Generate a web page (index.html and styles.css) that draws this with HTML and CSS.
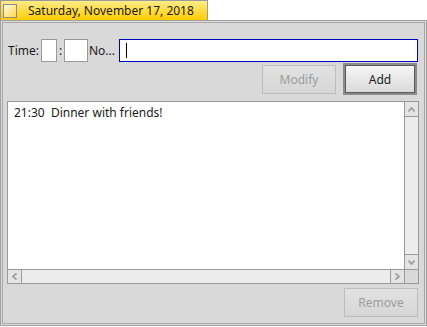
FILE: index.html
```html
<!DOCTYPE html>
<html>
<head>
<meta charset="utf-8">
<link rel="stylesheet" href="styles.css">
</head>
<body>
<div class="tabbar">
  <div class="tab">
    <span class="tab-icon"></span>
    <span class="tab-label">Saturday, November 17, 2018</span>
  </div>
</div>
<div class="panel">
  <div class="row-entry">
    <span class="lbl">Time:</span>
    <span class="box box-h"></span>
    <span class="colon">:</span>
    <span class="box box-m"></span>
    <span class="lbl lbl-note">No...</span>
    <span class="note-input"><span class="caret"></span></span>
  </div>
  <div class="row-buttons">
    <button class="btn btn-disabled">Modify</button>
    <span class="default-frame"><button class="btn btn-add">Add</button></span>
  </div>
  <div class="list">
    <div class="list-body">
      <div class="item">21:30&nbsp;&nbsp;Dinner with friends!</div>
    </div>
    <div class="vscroll">
      <span class="sb-btn sb-up"><svg width="7" height="5" viewBox="0 0 7 5"><path d="M0.5 4.5 L3.5 1 L6.5 4.5" fill="none" stroke="#999" stroke-width="1.6"/></svg></span>
      <span class="sb-track"></span>
      <span class="sb-btn sb-down"><svg width="7" height="5" viewBox="0 0 7 5"><path d="M0.5 0.5 L3.5 4 L6.5 0.5" fill="none" stroke="#999" stroke-width="1.6"/></svg></span>
    </div>
    <div class="hscroll">
      <span class="sb-btn sb-left"><svg width="5" height="7" viewBox="0 0 5 7"><path d="M4.5 0.5 L1 3.5 L4.5 6.5" fill="none" stroke="#999" stroke-width="1.6"/></svg></span>
      <span class="sb-track"></span>
      <span class="sb-btn sb-right"><svg width="5" height="7" viewBox="0 0 5 7"><path d="M0.5 0.5 L4 3.5 L0.5 6.5" fill="none" stroke="#999" stroke-width="1.6"/></svg></span>
    </div>
    <div class="corner"></div>
  </div>
  <div class="row-remove">
    <button class="btn btn-disabled btn-remove">Remove</button>
  </div>
</div>
</body>
</html>
```

FILE: styles.css
```css
html, body {
  margin: 0;
  padding: 0;
  background: #ffffff;
}
body {
  width: 427px;
  height: 327px;
  overflow: hidden;
  font-family: "Noto Sans", "DejaVu Sans", sans-serif;
  font-size: 12px;
  color: #1a1a1a;
}
.tabbar {
  height: 20px;
  display: flex;
}
.tab {
  width: 206px;
  height: 19px;
  border: 1px solid #9a9a9a;
  border-bottom: none;
  background: linear-gradient(#ffec8a, #ffcc00);
  display: flex;
  align-items: center;
}
.tab-icon {
  width: 12px;
  height: 12px;
  margin-left: 2px;
  margin-top: 1px;
  border: 1px solid #8a8a8a;
  background: linear-gradient(135deg, #fffbe0, #ffd84a);
}
.tab-label {
  margin-left: 11px;
  line-height: 19px;
}
.panel {
  height: 286px;
  border: 1px solid #a0a0a0;
  box-shadow: inset 0 0 0 1px #dcdcdc, inset 0 0 0 2px #a8a8a8;
  background: #d9d9d9;
  padding: 18px 7px 0 6px;
  box-sizing: content-box;
  width: 412px;
  display: flex;
  flex-direction: column;
}
.row-entry {
  display: flex;
  align-items: center;
  height: 23px;
}
.lbl {
  margin-left: 1px;
  line-height: 23px;
}
.box {
  height: 21px;
  border: 1px solid #9a9a9a;
  background: #ffffff;
}
.box-h {
  width: 14px;
  margin-left: 2px;
}
.colon {
  width: 7px;
  text-align: center;
}
.box-m {
  width: 22px;
}
.lbl-note {
  margin-left: 1px;
}
.note-input {
  flex: 1;
  height: 21px;
  margin-left: 4px;
  margin-right: 1px;
  border: 1px solid #0000c0;
  background: #ffffff;
  display: flex;
  align-items: center;
}
.caret {
  width: 1px;
  height: 15px;
  margin-left: 6px;
  background: #000000;
}
.row-buttons {
  margin-top: 1px;
  height: 32px;
  display: flex;
  justify-content: flex-end;
  align-items: center;
  padding-right: 2px;
}
.btn {
  font-family: "Noto Sans", "DejaVu Sans", sans-serif;
  font-size: 12px;
  width: 74px;
  height: 29px;
  padding: 0;
  margin: 0;
  border: 1px solid #bdbdbd;
  background: linear-gradient(#e2e2e2, #d6d6d6);
  color: #1a1a1a;
  box-sizing: border-box;
}
.btn-disabled {
  color: #9c9c9c;
}
.default-frame {
  margin-left: 7px;
  border: 2px solid #8c8c8c;
  display: flex;
}
.btn-add {
  width: 70px;
  height: 28px;
  border: 1px solid #5a5a5a;
  background: linear-gradient(#f6f6f6, #dadada);
}
.list {
  margin-top: 6px;
  height: 181px;
  border: 1px solid #9a9a9a;
  background: #ffffff;
  display: grid;
  grid-template-columns: 1fr 14px;
  grid-template-rows: 1fr 14px;
}
.list-body {
  padding: 4px 6px;
  overflow: hidden;
}
.item {
  line-height: 14px;
}
.vscroll {
  border-left: 1px solid #9a9a9a;
  display: flex;
  flex-direction: column;
  background: #ececec;
}
.hscroll {
  border-top: 1px solid #9a9a9a;
  display: flex;
  background: #ececec;
}
.sb-btn {
  display: flex;
  align-items: center;
  justify-content: center;
  background: #e4e4e4;
  box-sizing: border-box;
}
.sb-up, .sb-down {
  height: 15px;
}
.sb-up {
  border-bottom: 1px solid #9a9a9a;
}
.sb-down {
  border-top: 1px solid #9a9a9a;
}
.sb-left, .sb-right {
  width: 14px;
}
.sb-left {
  border-right: 1px solid #9a9a9a;
}
.sb-right {
  border-left: 1px solid #9a9a9a;
}
.sb-track {
  flex: 1;
}
.corner {
  background: #d9d9d9;
  border-top: 1px solid #9a9a9a;
  border-left: 1px solid #9a9a9a;
}
.row-remove {
  margin-top: 4px;
  display: flex;
  justify-content: flex-end;
  padding-right: 1px;
}
```
